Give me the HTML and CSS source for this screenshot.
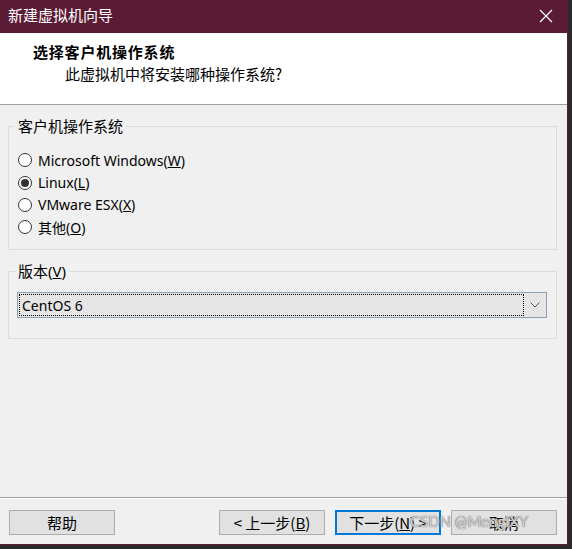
FILE: index.html
```html
<!DOCTYPE html>
<html lang="zh-CN">
<head>
<meta charset="utf-8">
<title>新建虚拟机向导</title>
<link rel="stylesheet" href="styles.css">
</head>
<body>
<div class="window">
  <div class="titlebar">
    <span class="title">新建虚拟机向导</span>
    <span class="close">
      <svg width="14" height="14" viewBox="0 0 14 14"><path d="M1 1 L13 13 M13 1 L1 13" stroke="#ffffff" stroke-width="1.2" fill="none"/></svg>
    </span>
  </div>
  <div class="header">
    <div class="h-title">选择客户机操作系统</div>
    <div class="h-sub">此虚拟机中将安装哪种操作系统?</div>
  </div>
  <div class="content">
    <fieldset class="group g1">
      <legend>客户机操作系统</legend>
      <div class="radios">
        <div class="radio"><span class="dot"></span><span>Microsoft Windows(<u>W</u>)</span></div>
        <div class="radio"><span class="dot on"></span><span>Linux(<u>L</u>)</span></div>
        <div class="radio"><span class="dot"></span><span>VMware ESX(<u>X</u>)</span></div>
        <div class="radio"><span class="dot"></span><span>其他(<u>O</u>)</span></div>
      </div>
    </fieldset>
    <fieldset class="group g2">
      <legend>版本(<u>V</u>)</legend>
      <div class="select">
        <div class="sel-val"><span>CentOS 6</span></div>
        <div class="sel-arrow">
          <svg width="10" height="6" viewBox="0 0 10 6"><path d="M0.5 0.5 L5 5 L9.5 0.5" stroke="#555" stroke-width="1" fill="none"/></svg>
        </div>
      </div>
    </fieldset>
  </div>
  <div class="footer">
    <button class="btn">帮助</button>
    <div class="spacer"></div>
    <button class="btn">&lt; 上一步(<u>B</u>)</button>
    <button class="btn default">下一步(<u>N</u>) &gt;</button>
    <button class="btn">取消</button>
    <div class="watermark">CSDN @MengIXY</div>
  </div>
</div>
</body>
</html>
```
FILE: styles.css
```css
html, body {
  margin: 0;
  padding: 0;
}
body {
  background: #2a2a2a;
  width: 572px;
  height: 549px;
  overflow: hidden;
  font-family: "Noto Sans", "Noto Sans CJK SC", sans-serif;
  font-size: 14px;
  color: #000;
}
.window {
  width: 567px;
  height: 544px;
  border-right: 1px solid #5c1b34;
  border-bottom: 1px solid #5c1b34;
  background: #f0f0f0;
  display: flex;
  flex-direction: column;
  position: relative;
}
.titlebar {
  height: 33px;
  background: #5c1b34;
  display: flex;
  align-items: center;
  justify-content: space-between;
  color: #fff;
  flex: none;
}
.title {
  padding-left: 8px;
  font-family: "Noto Sans CJK SC", sans-serif;
  font-size: 15px;
  line-height: 1;
  padding-bottom: 4px;
}
.close {
  width: 40px;
  display: flex;
  justify-content: center;
  padding-right: 1px;
  padding-bottom: 2px;
}
.header {
  height: 72px;
  background: #fff;
  border-bottom: 1px solid #a0a0a0;
  flex: none;
  box-sizing: border-box;
  padding-top: 9px;
  font-family: "Noto Sans CJK SC", sans-serif;
}
.h-title {
  padding-left: 33px;
  font-weight: bold;
  font-size: 15px;
  letter-spacing: 0.8px;
  line-height: 20px;
}
.h-sub {
  padding-left: 65px;
  font-size: 15px;
  line-height: 20px;
  margin-top: 2px;
}
.content {
  flex: 1;
  padding: 12px 10px 0 8px;
  border-bottom: 1px solid #a0a0a0;
  box-shadow: 0 1px 0 #ffffff;
}
.group {
  margin: 0;
  border: 1px solid #dcdcdc;
  padding: 0;
  box-sizing: border-box;
}
.group legend {
  margin-left: 6px;
  padding: 0 3px 0 3px;
  font-family: "Noto Sans", "Noto Sans CJK SC", sans-serif;
  font-size: 15px;
  line-height: 18px;
}
.g1 {
  height: 133px;
}
.radios {
  padding: 14px 0 0 9px;
}
.radio {
  display: flex;
  align-items: center;
  height: 22.4px;
  gap: 6px;
  font-family: "Noto Sans", "Noto Sans CJK SC", sans-serif;
  font-size: 14px;
}
.dot {
  width: 14px;
  height: 14px;
  border: 1px solid #333;
  border-radius: 50%;
  background: #fff;
  box-sizing: border-box;
  display: flex;
  align-items: center;
  justify-content: center;
  flex: none;
}
.dot.on::after {
  content: "";
  width: 8px;
  height: 8px;
  border-radius: 50%;
  background: #333;
}
.g2 {
  margin-top: 12px;
  height: 77px;
}
.select {
  margin: 12px 9px 0 8px;
  height: 26px;
  border: 1px solid #8ca0b4;
  background: #e5e5e5;
  box-sizing: border-box;
  display: flex;
  align-items: stretch;
}
.sel-val {
  flex: 1;
  margin: 1px 0 1px 1px;
  border: 1px dotted #000;
  display: flex;
  align-items: center;
  padding-left: 2px;
  font-size: 14px;
}
.sel-arrow {
  width: 22px;
  display: flex;
  align-items: center;
  justify-content: center;
}
.footer {
  height: 46px;
  flex: none;
  display: flex;
  align-items: center;
  padding: 0 10px 0 9px;
  gap: 10px;
  position: relative;
}
.spacer {
  flex: 1;
}
.btn {
  width: 106px;
  height: 25px;
  margin: 0;
  padding: 0;
  background: #e1e1e1;
  border: 1px solid #adadad;
  font-family: "Noto Sans CJK SC", sans-serif;
  font-size: 15px;
  line-height: 1;
  color: #000;
  box-sizing: border-box;
  margin-top: 3px;
}
.btn.default {
  border: 2px solid #0078d7;
}
.watermark {
  position: absolute;
  left: 410px;
  top: 14px;
  font-family: Lato, sans-serif;
  font-size: 15px;
  color: rgba(222, 222, 222, 0.92);
  text-shadow: 0 0 1px #666, 0 0 1px #888;
}
```
